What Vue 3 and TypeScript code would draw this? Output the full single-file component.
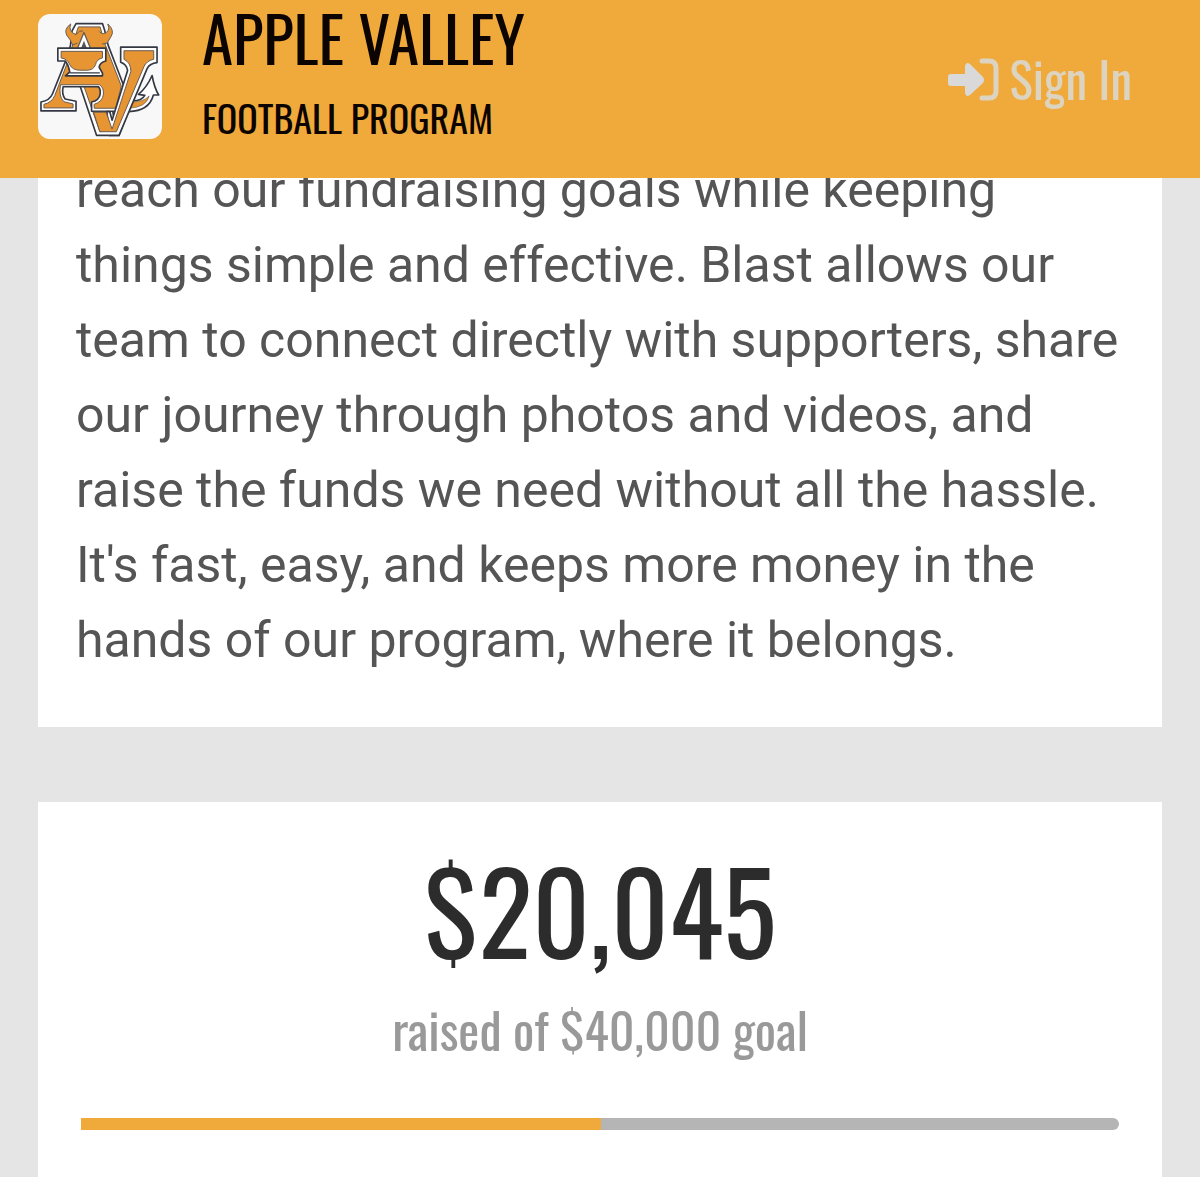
<script setup lang="ts">
const team = { name: 'APPLE VALLEY', program: 'FOOTBALL PROGRAM' }

const raised = 20045
const goal = 40000

const money = (amount: number): string => '$' + amount.toLocaleString('en-US')

const story: string[] = [
  'reach our fundraising goals while keeping',
  'things simple and effective. Blast allows our',
  'team to connect directly with supporters, share',
  'our journey through photos and videos, and',
  'raise the funds we need without all the hassle.',
  "It's fast, easy, and keeps more money in the",
  'hands of our program, where it belongs.',
]
</script>

<template>
  <div class="page">
    <header class="bar">
      <svg class="logo" viewBox="22 24 375 378" role="img" aria-label="Apple Valley logo">
        <rect x="22" y="24" width="375" height="378" fill="#f8f8f8" />
        <g stroke-linejoin="round">
          <!-- tail -->
          <path d="M298 286Q334 290 345 270L326 267Q352 245 367 210Q374 248 387 269L371 269Q358 318 296 319Z" fill="#fff" stroke="#343843" stroke-width="5" />
          <path d="M300 289Q340 292 358 272Q350 306 298 309Z" fill="#e79432" stroke="#655c55" stroke-width="2" />
          <!-- left arm of the V -->
          <path d="M147 235H235L250 330L285 345L267 391H199Z" fill="#fff" stroke="#343843" stroke-width="5" />
          <path d="M160 240H240V318L230 322L246 372L209 380Z" fill="#e79432" stroke="#655c55" stroke-width="3" />
          <!-- body of the A -->
          <path d="M137 53H217L224 75L234 118L281 240L260 318H184V290Q207 285 210 266Q212 250 204 244H98Q93 266 104 281L137 288V317H31V290Q58 285 66 265L106 165L120 120L125 75Z" fill="#fff" stroke="#343843" stroke-width="5" />
          <path d="M144 63H210L222 108L274 242L257 309H192V297Q217 290 220 266Q221 246 208 238H90Q84 274 100 289L128 296V308H40V297Q64 292 73 270L115 160L130 105Z" fill="#e79432" stroke="#655c55" stroke-width="3" />
          <path d="M161 80L181 128H141Z" fill="#fff" stroke="#655c55" stroke-width="4" />
          <path d="M161 105L170 128H152Z" fill="#555" />
          <!-- horns -->
          <path d="M158 75Q148 72 137 86Q112 78 121 54Q99 70 109 88Q120 101 127 118L141 112" fill="#e79432" stroke="#655c55" stroke-width="3" />
          <path d="M202 76L219 84Q243 78 233 54Q255 74 243 92L231 112L205 117" fill="#e79432" stroke="#655c55" stroke-width="3" />
          <path d="M168 75H204L218 90L216 120H188L170 92Z" fill="#e79432" />
          <!-- upper panel of the A -->
          <path d="M82 127H227V166Q209 170 207 185L217 203V211H105L118 199Q113 175 104 166H82Z" fill="#fff" stroke="#343843" stroke-width="5" />
          <path d="M92 137H217V157Q199 161 196 177Q190 194 170 194H147Q125 193 118 177Q111 159 92 157Z" fill="#e79432" stroke="#655c55" stroke-width="3" />
          <path d="M118 202H209" fill="none" stroke="#343843" stroke-width="4" />
          <!-- right arm of the V -->
          <path d="M236 368L230 319H239L246 345L293 195Q290 176 272 170V124H382V171Q360 173 352 189L267 391H236" fill="#fff" stroke="#343843" stroke-width="5" />
          <path d="M282 135H372V161Q350 165 342 184L259 380H209L190 321H228L246 372L303 197Q303 171 282 161Z" fill="#e79432" stroke="#655c55" stroke-width="3" />
        </g>
      </svg>
      <div class="titles">
        <h1>{{ team.name }}</h1>
        <p>{{ team.program }}</p>
      </div>
      <a class="signin" href="#signin">
        <svg viewBox="0 0 52 46" aria-hidden="true">
          <path d="M3 17H17V9Q18 4 22 7L35 20Q37 23 35 26L22 38Q18 41 17 36V29H3Q0 29 0 26V20Q0 17 3 17Z" fill="#d9d9d9" />
          <path d="M34 4H41Q48 4 48 11V34Q48 41 41 41H34" fill="none" stroke="currentColor" stroke-width="5" stroke-linecap="round" />
        </svg>
        <span>Sign In</span>
      </a>
    </header>

    <main>
      <section class="card story">
        <p><template v-for="line in story" :key="line">{{ line }}<br /></template></p>
      </section>

      <section class="card totals">
        <h2>{{ money(raised) }}</h2>
        <p id="goal">raised of {{ money(goal) }} goal</p>
        <progress :value="raised" :max="goal" aria-labelledby="goal"></progress>
      </section>
    </main>
  </div>
</template>

<style>
body {
  margin: 0;
  background: #e5e5e5;
}
</style>

<style scoped>
.page {
  display: flex;
  flex-direction: column;
  min-height: 100vh;
  font-family: Roboto, sans-serif;
}

h1,
h2,
p {
  margin: 0;
  font-weight: 400;
}

.bar {
  position: sticky;
  top: 0;
  z-index: 1;
  display: flex;
  align-items: flex-start;
  box-sizing: border-box;
  height: 178px;
  padding: 0 68px 0 38px;
  background: #f0a93b;
}

.logo {
  flex: none;
  width: 124px;
  height: 125px;
  margin-top: 14px;
  border-radius: 12px;
}

.titles {
  flex: 1;
  margin-left: 40px;
  color: #0c0400;
}

.bar,
.totals {
  font-family: Oswald, "Liberation Sans Narrow", sans-serif;
}

h1 {
  font-size: 63px;
  line-height: 74px;
}

.titles p {
  font-size: 38px;
  line-height: 86px;
}

.signin {
  display: flex;
  align-items: center;
  gap: 10px;
  height: 160px;
  color: #dcd4c0;
  font-size: 49px;
  text-decoration: none;
}

.signin svg {
  width: 52px;
  height: 46px;
}

.signin span {
  padding-bottom: 5px;
}

main {
  display: flex;
  flex: 1;
  flex-direction: column;
  gap: 75px;
  margin: -25px 38px 0;
}

.card {
  background: #fff;
}

.story {
  padding: 0 38px 49px;
}

.story p {
  color: #555;
  font-size: 50px;
  line-height: 75px;
  white-space: nowrap;
}

.totals {
  flex: 1;
  padding: 24px 43px;
  text-align: center;
}

h2 {
  color: #2c2c2c;
  font-size: 112px;
  line-height: 164px;
}

.totals p {
  color: #999;
  font-size: 50px;
  line-height: 76px;
}

progress {
  display: block;
  width: 100%;
  height: 12px;
  margin-top: 52px;
  overflow: hidden;
  border: 0;
  border-radius: 0 6px 6px 0;
  background: #b5b5b5;
  appearance: none;
}

progress::-webkit-progress-bar {
  background: #b5b5b5;
}

progress::-webkit-progress-value {
  background: #f0a93b;
}
</style>
